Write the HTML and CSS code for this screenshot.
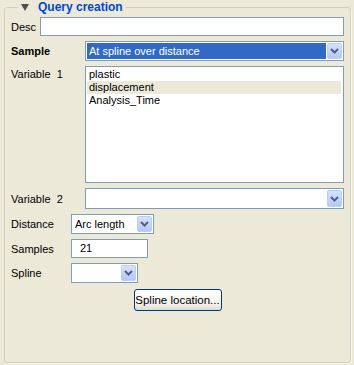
FILE: index.html
```html
<!doctype html>
<html>
<head>
    <title>Query creation</title>
    <link rel="stylesheet" href="styles.css">
</head>
<body>
<fieldset class="group">
    <legend class="group-title">
        <svg class="toggle" width="8" height="7" viewBox="0 0 8 7"><polygon points="0,0 8,0 4,7" fill="#4f4f4f"/></svg>
        <span>Query creation</span>
    </legend>

    <!-- Description -->
    <div class="row row-desc">
        <span class="label label-desc">Desc</span>
        <div class="text-field"></div>
    </div>

    <!-- Sample mode -->
    <div class="row row-sample">
        <span class="label label-wide bold">Sample</span>
        <div class="combo combo-fill selected">
            <span class="combo-value">At spline over distance</span>
            <span class="combo-btn"><svg width="9" height="6" viewBox="0 0 9 6"><polyline points="1,1 4.5,4.5 8,1" fill="none" stroke="#4d6185" stroke-width="2"/></svg></span>
        </div>
    </div>

    <!-- Variables -->
    <div class="row row-list">
        <span class="label label-wide label-top">Variable&nbsp; 1</span>
        <div class="listbox">
            <div class="list-item">plastic</div>
            <div class="list-item active">displacement</div>
            <div class="list-item">Analysis_Time</div>
        </div>
    </div>

    <div class="row row-var2">
        <span class="label label-wide">Variable&nbsp; 2</span>
        <div class="combo combo-fill">
            <span class="combo-value"></span>
            <span class="combo-btn"><svg width="9" height="6" viewBox="0 0 9 6"><polyline points="1,1 4.5,4.5 8,1" fill="none" stroke="#4d6185" stroke-width="2"/></svg></span>
        </div>
    </div>

    <!-- Distance settings -->
    <div class="row row-distance">
        <span class="label label-mid">Distance</span>
        <div class="combo combo-distance">
            <span class="combo-value">Arc length</span>
            <span class="combo-btn"><svg width="9" height="6" viewBox="0 0 9 6"><polyline points="1,1 4.5,4.5 8,1" fill="none" stroke="#4d6185" stroke-width="2"/></svg></span>
        </div>
    </div>

    <div class="row row-samples">
        <span class="label label-mid">Samples</span>
        <div class="text-field samples-field">21</div>
    </div>

    <div class="row row-spline">
        <span class="label label-mid">Spline</span>
        <div class="combo combo-spline">
            <span class="combo-value"></span>
            <span class="combo-btn"><svg width="9" height="6" viewBox="0 0 9 6"><polyline points="1,1 4.5,4.5 8,1" fill="none" stroke="#4d6185" stroke-width="2"/></svg></span>
        </div>
    </div>

    <div class="button-row">
        <button type="button" class="xp-button">Spline location...</button>
    </div>
</fieldset>
</body>
</html>
```

FILE: styles.css
```css
body {
    margin: 0;
    padding: 0;
    font-family: "Liberation Sans", Arial, sans-serif;
    font-size: 11px;
    color: #000000;
    background-color: #ece9d8; /* XP dialog */
    width: 354px;
    height: 365px;
    overflow: hidden;
}
.group {
    box-sizing: border-box;
    margin: 1px 3px 0 4px;
    height: 362px;
    padding: 3px 6px 0 6px;
    border: 1px solid #d0d0bf;
    border-radius: 3px;
    box-shadow: 1px 1px 0 #f7f6ef;
}
.group-title {
    display: flex;
    align-items: center;
    margin-left: 7px;
    padding: 0 3px;
    height: 13px;
    line-height: 13px;
    font-weight: bold;
    font-size: 12px;
    color: #0046d5;
}
.toggle {
    margin-right: 9px;
}
.row {
    display: flex;
    align-items: center;
    margin-top: 5px;
}
.row-desc {
    margin-top: 0;
}
.row-list {
    align-items: flex-start;
}
.label {
    flex: none;
}
.label-desc {
    width: 29px;
}
.label-wide {
    width: 74px;
}
.label-mid {
    width: 60px;
}
.label-top {
    margin-top: 2px;
}
.bold {
    font-weight: bold;
}
.text-field {
    box-sizing: border-box;
    flex: 1;
    height: 19px;
    border: 1px solid #7f9db9;
    background-color: #ffffff;
    line-height: 17px;
}
.samples-field {
    flex: none;
    width: 77px;
    padding-left: 8px;
}
.combo {
    box-sizing: border-box;
    display: flex;
    height: 20px;
    padding: 1px;
    border: 1px solid #7f9db9;
    background-color: #ffffff;
}
.combo-fill {
    flex: 1;
}
.row-var2 .combo {
    height: 21px;
}
.combo-distance {
    width: 83px;
}
.combo-spline {
    width: 67px;
}
.combo-value {
    flex: 1;
    padding-left: 2px;
    margin-right: 1px;
    line-height: 16px;
    white-space: nowrap;
    overflow: hidden;
}
.selected .combo-value {
    background-color: #316ac5;
    color: #ffffff;
}
.combo-btn {
    box-sizing: border-box;
    display: flex;
    align-items: center;
    justify-content: center;
    width: 15px;
    border: 1px solid #b9cdf6;
    border-radius: 2px;
    background: linear-gradient(#d6e1fc, #b4c8f6);
}
.listbox {
    box-sizing: border-box;
    flex: 1;
    height: 117px;
    padding: 1px 2px 1px 1px;
    border: 1px solid #7f9db9;
    background-color: #ffffff;
}
.list-item {
    height: 13px;
    line-height: 13px;
    padding-left: 2px;
}
.list-item.active {
    background-color: #ece9d8;
}
.button-row {
    display: flex;
    justify-content: center;
    margin-top: 6px;
}
.xp-button {
    box-sizing: border-box;
    width: 88px;
    height: 22px;
    padding: 0;
    font-family: "Liberation Sans", Arial, sans-serif;
    font-size: 11.5px;
    white-space: nowrap;
    color: #000000;
    border: 1px solid #003c74;
    border-radius: 3px;
    background: linear-gradient(#ffffff, #f4f3ee 70%, #dcdad0);
}
```
